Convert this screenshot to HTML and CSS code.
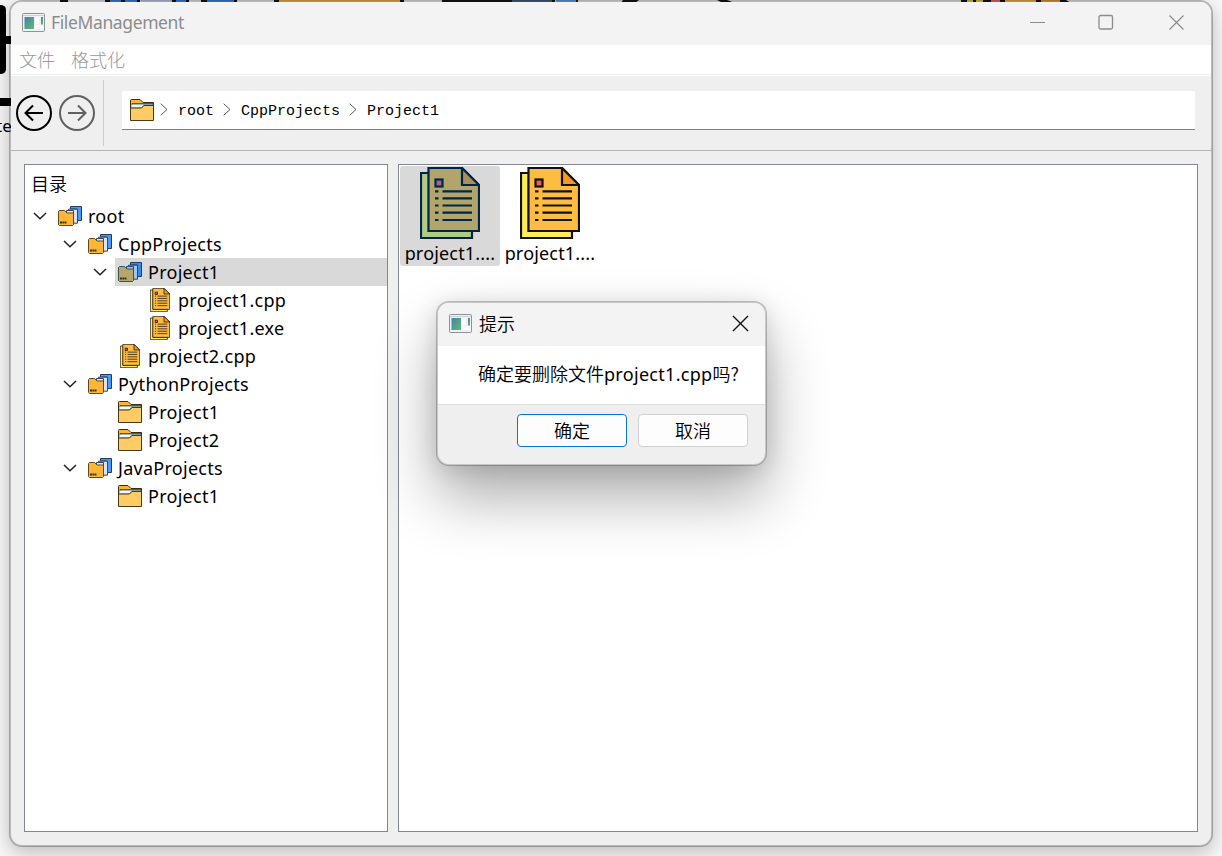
FILE: index.html
```html
<!DOCTYPE html>
<html lang="zh">
<head>
<meta charset="utf-8">
<title>FileManagement</title>
<link rel="stylesheet" href="styles.css">
</head>
<body>
<svg class="defs" width="0" height="0">
  <linearGradient id="pane" x1="0" y1="0" x2="1" y2="1"><stop offset="0" stop-color="#4682a8"/><stop offset="1" stop-color="#5dbb73"/></linearGradient>
  <symbol id="app" viewBox="0 0 23 19">
    <rect x=".5" y=".5" width="22" height="18" rx="1" fill="#eef0f3" stroke="#8b949d"/>
    <path d="M1 2.5h21" stroke="#cbd1d8"/>
    <rect x="2.500" y="4" width="9.500" height="12" fill="url(#pane)"/>
    <path d="M13 4h4v7h-4zM13 12h8v4h-8z" fill="#fafafa"/>
    <rect x="19" y="4" width="2" height="7.500" fill="url(#pane)"/>
  </symbol>
  <symbol id="doc" viewBox="0 0 60 72">
    <path class="back" d="M1 6h8v58h43v7H1z"/>
    <path class="sheet" d="M8.500 1H42l17 17v46H8.500z"/>
    <path class="fold" d="M42 1v17h17z"/>
    <rect class="stamp" x="15.500" y="12.500" width="7" height="7"/>
    <path class="ink" d="M15 24.300h3.500M22.500 24.300H52M15 31.300h3.500M22.500 31.300H52M15 38.500h3.500M22.500 38.500H52M15 45.700h3.500M22.500 45.700H52M15 53h3.500M22.500 53H52"/>
  </symbol>
  <symbol id="folder" viewBox="0 0 24 22">
    <path d="M.5 21V1.500Q.5.500 1.500.500H10l3 3h10.500V10H.5" fill="#ffb62e" stroke="#3c2c10"/>
    <path d="M2 4.500h21V8H2z" fill="#7fa0ac" stroke="#35464c" stroke-width=".8"/>
    <path d="M1.500 8.500V5.800h12L11.500 8.500z" fill="#f4f6f8"/>
    <path d="M.5 9H11.500L14 6.500h9.500v15H.5z" fill="#ffcb64" stroke="#4a3919"/>
  </symbol>
  <symbol id="stack" viewBox="0 0 24 20">
    <path class="blue" d="M12.500 3V.5h11v14H19V3z"/>
    <path class="paper" d="M10.500 6V3.200h9v14H15"/>
    <path class="paper" d="M8.500 7V4.500h7V18"/>
    <path class="case" d="M.5 18.500V5.500l1-1h5L9 7h6.500v11.500l-1 1h-13z"/>
    <path class="label" d="M2 16.500h6.500"/>
  </symbol>
  <symbol id="chev" viewBox="0 0 14 8"><path d="M1 1l6 5.800L13 1" fill="none" stroke="#222" stroke-width="1.500"/></symbol>
  <symbol id="next" viewBox="0 0 8 13"><path d="M.7.7L7 6.500.7 12.300" fill="none" stroke="#555" stroke-width="1"/></symbol>
</svg>

<div class="desktop">
  <svg class="backdrop" width="1222" height="140">
    <path d="M60 0h8v3h-8zM105 0h35v3h-35zM172 0h17v3h-17zM201 0h36v3h-36zM274 0h130v3H274zM442 0h113v3H442zM623 0h16l-4 3h-14zM717 0h10l8 3h-12zM961 0h105l5 3H961z" fill="#161616"/>
    <path d="M110 0h11v3h-11zM125 0h12v3h-12zM176 0h10v3h-10zM207 0h27v3h-27z" fill="#3e8ef2"/>
    <path d="M141 0h31v3h-31z" fill="#cbdcf4"/><path d="M512 0h40v3h-40z" fill="#53618d"/><path d="M556 0h20v3h-20z" fill="#68aaf5"/><path d="M576 0h2v3h-2z" fill="#222"/>
    <path d="M279 0h121v3H279zM1005 0h31v3h-31z" fill="#ffc04a"/><path d="M1041 0h19v3h-19z" fill="#f5a838"/><path d="M967 0h6v3h-6zM976 0h7v3h-7z" fill="#f4d454"/><path d="M991 0h9v3h-9z" fill="#f07480"/>
    <path d="M0 5q6 0 6 5v59q0 5-6 5zM5 36h8v8H5zM0 98h13v8H0z" fill="#000"/>
  </svg>
  <span class="stray">te</span>

  <main class="window">
    <header class="titlebar">
      <svg class="app-icon"><use href="#app"/></svg><span class="title">FileManagement</span>
      <svg class="controls" width="158" height="20" viewBox="0 0 158 20"><path d="M1 10.500h15M140.500 3.500l14 14M154.500 3.500l-14 14" stroke="#8c8c8c" stroke-width="1.200" fill="none"/><rect x="70" y="3.500" width="13.500" height="13.500" rx="1.500" fill="none" stroke="#8c8c8c" stroke-width="1.300"/></svg>
    </header>
    <nav class="menu"><span>文件</span><span>格式化</span></nav>
    <div class="toolbar">
      <svg width="36" height="36" viewBox="0 0 36 36" fill="none" stroke="#000" stroke-width="2"><circle cx="18" cy="18" r="17"/><path d="M27 18H9.500M17 10.500L9.500 18l7.500 7.500"/></svg>
      <svg class="forward" width="36" height="36" viewBox="0 0 36 36" fill="none" stroke="#606060" stroke-width="2"><circle cx="18" cy="18" r="17"/><path d="M9 18h17.500M19 10.500l7.500 7.500-7.500 7.500"/></svg>
      <i class="rule"></i>
      <div class="address">
        <svg class="i-folder"><use href="#folder"/></svg>
        <svg class="i-next"><use href="#next"/></svg><span>root</span>
        <svg class="i-next"><use href="#next"/></svg><span>CppProjects</span>
        <svg class="i-next"><use href="#next"/></svg><span>Project1</span>
      </div>
    </div>
    <section class="panes">
      <aside class="tree">
        <h2>目录</h2>
        <div class="row d0"><svg class="i-chev"><use href="#chev"/></svg><div class="item"><svg class="i-stack"><use href="#stack"/></svg><span>root</span></div></div>
        <div class="row d1"><svg class="i-chev"><use href="#chev"/></svg><div class="item"><svg class="i-stack"><use href="#stack"/></svg><span>CppProjects</span></div></div>
        <div class="row d2"><svg class="i-chev"><use href="#chev"/></svg><div class="item selected"><svg class="i-stack"><use href="#stack"/></svg><span>Project1</span></div></div>
        <div class="row d3 leaf"><div class="item"><svg class="i-doc"><use href="#doc"/></svg><span>project1.cpp</span></div></div>
        <div class="row d3 leaf"><div class="item"><svg class="i-doc"><use href="#doc"/></svg><span>project1.exe</span></div></div>
        <div class="row d2 leaf"><div class="item"><svg class="i-doc"><use href="#doc"/></svg><span>project2.cpp</span></div></div>
        <div class="row d1"><svg class="i-chev"><use href="#chev"/></svg><div class="item"><svg class="i-stack"><use href="#stack"/></svg><span>PythonProjects</span></div></div>
        <div class="row d2 leaf"><div class="item"><svg class="i-folder"><use href="#folder"/></svg><span>Project1</span></div></div>
        <div class="row d2 leaf"><div class="item"><svg class="i-folder"><use href="#folder"/></svg><span>Project2</span></div></div>
        <div class="row d1"><svg class="i-chev"><use href="#chev"/></svg><div class="item"><svg class="i-stack"><use href="#stack"/></svg><span>JavaProjects</span></div></div>
        <div class="row d2 leaf"><div class="item"><svg class="i-folder"><use href="#folder"/></svg><span>Project1</span></div></div>
      </aside>
      <div class="files">
        <div class="file selected"><svg><use href="#doc"/></svg><span>project1....</span></div>
        <div class="file"><svg><use href="#doc"/></svg><span>project1....</span></div>
      </div>
    </section>
  </main>

  <div class="dialog" role="dialog">
    <header><svg class="app-icon"><use href="#app"/></svg><span>提示</span><svg class="close" width="17" height="17" viewBox="0 0 17 17"><path d="M1 1l15 15M16 1L1 16" stroke="#111" stroke-width="1.400"/></svg></header>
    <p>确定要删除文件<span class="fname">project1.cpp</span>吗?</p>
    <footer><button class="primary">确定</button><button>取消</button></footer>
  </div>
</div>
</body>
</html>
```
FILE: styles.css
```css
* { box-sizing: border-box; }
body { margin: 0; overflow: hidden; font: 18px/28px "Noto Sans", "Noto Sans CJK SC", sans-serif; color: #000; }
svg { display: block; flex: none; }
.defs { position: absolute; }
.desktop {
  --line: #111; --back: #ffec5c; --sheet: #ffbc43; --fold: #f49a24; --stamp: #ea5d64;
  --case: #ffb638; --case-line: #62471d; --paper: #dde2ee; --paper-line: #3c4655; --blue: #489cf5;
  position: relative; width: 1222px; height: 856px; padding-left: 9px; background: #f8f8f8; overflow: hidden;
}
.selected {
  --line: #00254a; --back: #b1cb80; --sheet: #b1a56b; --fold: #a99057; --stamp: #a1678a;
  --case: #b5a66b; --case-line: #3c4d55; --paper: #a5c5e8; --paper-line: #234a70; --blue: #328cee;
}
.backdrop { position: absolute; left: 0; top: 0; }
.stray { position: absolute; left: -4px; top: 112px; font-size: 17px; }

.window { position: relative; display: flex; flex-direction: column; width: 1204px; height: 847px; border: 2px solid rgba(0,0,0,.25); border-radius: 13px; background: #efefef; background-clip: padding-box; box-shadow: 0 6px 20px rgba(0,0,0,.24); }
.titlebar { display: flex; align-items: center; height: 43px; padding: 0 24px 3px 11px; background: #f3f3f3; border-radius: 11px 11px 0 0; color: #8c8c8c; }
.app-icon { width: 23px; height: 19px; }
.title { margin-left: 6px; font-size: 17.500px; letter-spacing: -.38px; }
.controls { margin-left: auto; }
.menu { display: flex; gap: 16px; height: 31px; padding: 0 8px; background: #fff; border-bottom: 1px solid #fff; box-shadow: inset 0 -1px #eee; color: #999; font-family: "Noto Sans CJK SC", sans-serif; font-weight: 300; }
.toolbar { display: flex; align-items: center; height: 75px; padding: 0 16px 0 5px; border-bottom: 1px solid #b4b4b4; }
.forward { margin-left: 7px; }
.rule { width: 1px; height: 66px; margin: 0 18px 0 8px; background: #ccc; }
.address { display: flex; align-items: center; flex: 1; height: 39px; margin-top: -6px; padding: 0 8px; background: #fff; border-bottom: 1px solid #808080; font: 15px/28px "Liberation Mono", monospace; }
.address span { padding-top: 4px; }
.i-next { width: 8px; height: 13px; margin: 0 10px 0 9px; }
.address .i-folder + .i-next { margin: 0 10px 0 6px; }
.i-folder { width: 24px; height: 22px; }
.i-stack { width: 24px; height: 20px; }
.i-doc { width: 20px; height: 24px; margin: 0 2px; }
.i-chev { width: 14px; height: 8px; margin-right: 8px; }

.panes { display: flex; gap: 10px; flex: 1; padding: 13px; min-height: 0; }
.tree { width: 364px; background: #fff; border: 1px solid #828790; padding-top: 3px; }
.tree h2 { margin: 0; height: 34px; padding: 0 0 0 6px; font: 18px/30px "Noto Sans CJK SC", sans-serif; font-weight: 350; }
.row { display: flex; align-items: center; height: 28px; padding-left: 8px; }
.d1 { padding-left: 38px; }
.d2 { padding-left: 68px; }
.d2.leaf { padding-left: 90px; }
.d3.leaf { padding-left: 120px; }
.item { display: flex; align-items: center; flex: 1; gap: 6px; height: 28px; padding-left: 3px; letter-spacing: .27px; }
.item.selected { background: #d9d9d9; }

.files { display: flex; flex: 1; padding: 1px; background: #fff; border: 1px solid #828790; }
.file { display: flex; flex-direction: column; align-items: center; width: 100px; height: 100px; padding-top: 1px; border-radius: 3px; line-height: 28px; letter-spacing: .18px; }
.file.selected { background: #d9d9d9; }
.file svg { width: 60px; height: 72px; }

.back, .sheet, .fold, .stamp, .ink { stroke: var(--line); stroke-width: 2.200; }
.back { fill: var(--back); }
.sheet { fill: var(--sheet); }
.fold { fill: var(--fold); }
.stamp { fill: var(--stamp); }
.ink { fill: none; }
.blue { fill: var(--blue); stroke: #243c59; }
.paper { fill: var(--paper); stroke: var(--paper-line); }
.case { fill: var(--case); stroke: var(--case-line); }
.label { fill: none; stroke: #37322a; stroke-width: 1.800; stroke-dasharray: 2 .4; }

.dialog { position: absolute; left: 436px; top: 301px; width: 331px; height: 165px; display: flex; flex-direction: column; border: 2px solid rgba(0,0,0,.22); border-radius: 13px; background: #efefef; background-clip: padding-box; box-shadow: 0 32px 60px rgba(0,0,0,.32), 0 3px 22px rgba(0,0,0,.12); font-family: "Noto Sans CJK SC", sans-serif; font-weight: 350; }
.dialog header { display: flex; align-items: center; height: 43px; padding: 0 16px 2px 11px; border-radius: 11px 11px 0 0; background: #f3f3f3; }
.dialog header span { margin: -2px 0 0 7px; }
.close { margin-left: auto; }
.dialog p { margin: 0; height: 59px; padding: 13px 0 0 40px; background: #fff; border-bottom: 1px solid #dfdfdf; white-space: nowrap; }
.fname { font-family: "Noto Sans", sans-serif; font-weight: 400; letter-spacing: .3px; }
.dialog footer { display: flex; justify-content: flex-end; gap: 11px; padding: 9px 17px 0; }
.dialog button { width: 110px; height: 33px; padding: 0 0 2px; border: 1px solid #d0d0d0; border-radius: 4px; background: #fdfdfd; font: 18px/28px "Noto Sans CJK SC", sans-serif; font-weight: 350; color: #000; }
.dialog .primary { border-color: #0078d4; }
```
